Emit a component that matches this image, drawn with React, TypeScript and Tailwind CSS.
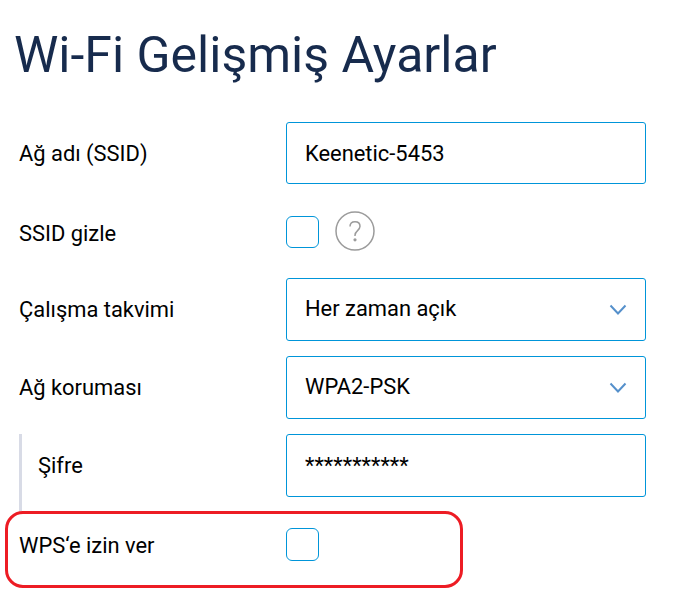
import { useState, type ReactNode } from "react";
import clsx from "clsx";

interface RowProps {
  label: string;
  className?: string;
  labelClassName?: string;
  children: ReactNode;
}

function Row({ label, className, labelClassName, children }: RowProps) {
  return (
    <div className={clsx("flex items-center", className)}>
      <span className={clsx("shrink-0 whitespace-nowrap", labelClassName ?? "w-[267px]")}>
        {label}
      </span>
      {children}
    </div>
  );
}

function SelectField({ value }: { value: string }) {
  return (
    <button
      type="button"
      className="flex h-[63px] w-[360px] items-center justify-between rounded-[3px] border border-[#0095d9] bg-white pr-[18px] pb-px pl-[18px] text-left"
    >
      <span>{value}</span>
      <svg width="18" height="12" viewBox="0 0 18 12" fill="none" className="mt-[2px]">
        <path d="M1.5 1.5 9 9.5 16.5 1.5" stroke="#5590cb" strokeWidth="2" />
      </svg>
    </button>
  );
}

function Checkbox({ label, className }: { label: string; className?: string }) {
  const [checked, setChecked] = useState(false);

  return (
    <button
      type="button"
      role="checkbox"
      aria-checked={checked}
      aria-label={label}
      onClick={() => setChecked(!checked)}
      className={clsx(
        "w-[33px] rounded-md border border-[#0095d9]",
        checked ? "bg-[#0095d9]" : "bg-white",
        className,
      )}
    />
  );
}

function HelpIcon() {
  return (
    <svg width="40" height="40" viewBox="0 0 40 40" fill="none" className="ml-4">
      <circle cx="20" cy="20" r="19" stroke="#9b9b9b" strokeWidth="1.5" />
      <path
        d="M15 15.6C15 12.6 17 10.7 20 10.7s5 1.8 5 4.6c0 4.2-5 4.4-5 8.9v.7"
        stroke="#9b9b9b"
        strokeWidth="1.5"
      />
      <circle cx="20" cy="28.8" r="1.6" fill="#9b9b9b" />
    </svg>
  );
}

export default function App() {
  const [ssid, setSsid] = useState("Keenetic-5453");
  const [password, setPassword] = useState("***********");

  return (
    <main className="h-[614px] w-[675px] overflow-hidden bg-white font-['Roboto',sans-serif] text-[21.9px] leading-7 text-black">
      <h1 className="h-[122px] pt-[25px] pl-[14px] text-[50px] leading-[60px] whitespace-nowrap text-[#172b4d]">
        Wi-Fi Gelişmiş Ayarlar
      </h1>

      <div className="pl-[19px]">
        <Row label="Ağ adı (SSID)" labelClassName="w-[267px] pt-[2px]">
          <input
            value={ssid}
            onChange={(event) => setSsid(event.target.value)}
            className="h-[62px] w-[360px] rounded-[3px] border border-[#0095d9] px-[18px] outline-none"
          />
        </Row>
        <Row label="SSID gizle" className="h-[94px]" labelClassName="w-[267px] pt-[5px]">
          <Checkbox label="SSID gizle" className="mt-[2px] h-8" />
          <HelpIcon />
        </Row>
        <div className="flex flex-col gap-[15px]">
          <Row label="Çalışma takvimi">
            <SelectField value="Her zaman açık" />
          </Row>
          <Row label="Ağ koruması">
            <SelectField value="WPA2-PSK" />
          </Row>
          <Row
            label="Şifre"
            className="h-[77px] items-start border-l-[3px] border-[#d8dbe6]"
            labelClassName="w-[264px] pt-[18px] pl-4"
          >
            <input
              value={password}
              onChange={(event) => setPassword(event.target.value)}
              className="h-[63px] w-[360px] rounded-[3px] border border-[#0095d9] px-[18px] outline-none"
            />
          </Row>
        </div>
      </div>

      <Row
        label="WPS‘e izin ver"
        className="ml-[5px] h-[77px] w-[458px] rounded-[18px] border-[3px] border-[#ed1c24] pb-[10px] pl-[11px]"
        labelClassName="w-[267px] pt-[3px]"
      >
        <Checkbox label="WPS‘e izin ver" className="h-[33px]" />
      </Row>
    </main>
  );
}
